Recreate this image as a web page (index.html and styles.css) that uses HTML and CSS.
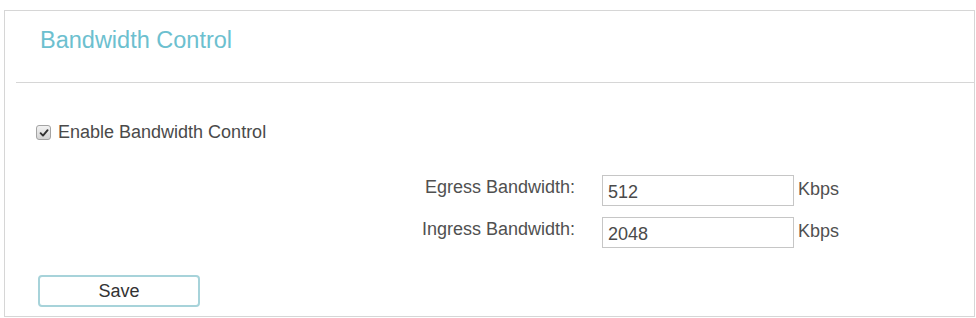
FILE: index.html
```html
<!DOCTYPE html>
<html>
<head>
<meta charset="utf-8">
<link rel="stylesheet" href="styles.css">
</head>
<body>
<div class="panel">
  <div class="panel-head">
    <h2 class="title">Bandwidth Control</h2>
  </div>
  <div class="panel-body">
    <label class="check-row">
      <span class="checkbox">
        <svg width="10" height="10" viewBox="0 0 10 10"><path d="M1.6 5.2 L4 7.6 L8.6 2.2" fill="none" stroke="#333" stroke-width="1.9" stroke-linecap="round" stroke-linejoin="round"/></svg>
      </span>
      <span class="check-text">Enable Bandwidth Control</span>
    </label>
    <div class="form-grid">
      <span class="field-label">Egress Bandwidth:</span>
      <span class="field-input">512</span>
      <span class="unit">Kbps</span>
      <span class="field-label">Ingress Bandwidth:</span>
      <span class="field-input">2048</span>
      <span class="unit">Kbps</span>
    </div>
    <div class="actions">
      <button class="btn-save">Save</button>
    </div>
  </div>
</div>
</body>
</html>
```
FILE: styles.css
```css
html, body {
  margin: 0;
  padding: 0;
  background: #ffffff;
}
body {
  font-family: "Liberation Sans", Arial, sans-serif;
  color: #555555;
  overflow: hidden;
}
.panel {
  box-sizing: border-box;
  margin: 10px 1px 0 4px;
  height: 307px;
  border: 1px solid #d6d6d6;
}
.panel-head {
  margin-left: 11px;
  margin-right: -1px;
  padding: 16px 0 29px 24px;
  border-bottom: 1px solid #d6d6d6;
}
.title {
  margin: 0;
  font-size: 23.5px;
  line-height: 26px;
  font-weight: normal;
  color: #6cc0cf;
}
.panel-body {
  padding: 0;
}
.check-row {
  display: flex;
  align-items: flex-start;
  margin: 36px 0 0 31px;
  font-size: 18px;
  line-height: 20px;
}
.checkbox {
  box-sizing: border-box;
  width: 15px;
  height: 15px;
  margin-top: 6px;
  border: 1px solid #a4a4a4;
  border-radius: 3px;
  background: linear-gradient(#f2f2f2, #d4d4d4);
  display: flex;
  align-items: center;
  justify-content: center;
}
.check-text {
  margin-left: 7px;
  margin-top: 3px;
  color: #4a4a4a;
}
.form-grid {
  display: grid;
  grid-template-columns: 597px 192px auto;
  row-gap: 11px;
  align-items: start;
  margin-top: 33px;
  font-size: 18px;
  line-height: 20px;
}
.field-label {
  text-align: right;
  padding-right: 27px;
  margin-top: 2px;
  color: #505050;
}
.field-input {
  box-sizing: border-box;
  height: 31px;
  padding: 6px 5px 3px;
  border: 1px solid #c6c6c6;
  color: #4a4a4a;
}
.unit {
  margin-left: 4px;
  margin-top: 4px;
  color: #505050;
}
.actions {
  margin: 27px 0 0 33px;
}
.btn-save {
  box-sizing: border-box;
  width: 162px;
  height: 32px;
  border: 2px solid #a7d3da;
  border-radius: 4px;
  background: #ffffff;
  font-family: "Liberation Sans", Arial, sans-serif;
  font-size: 18px;
  color: #333333;
  padding: 0;
}
```
